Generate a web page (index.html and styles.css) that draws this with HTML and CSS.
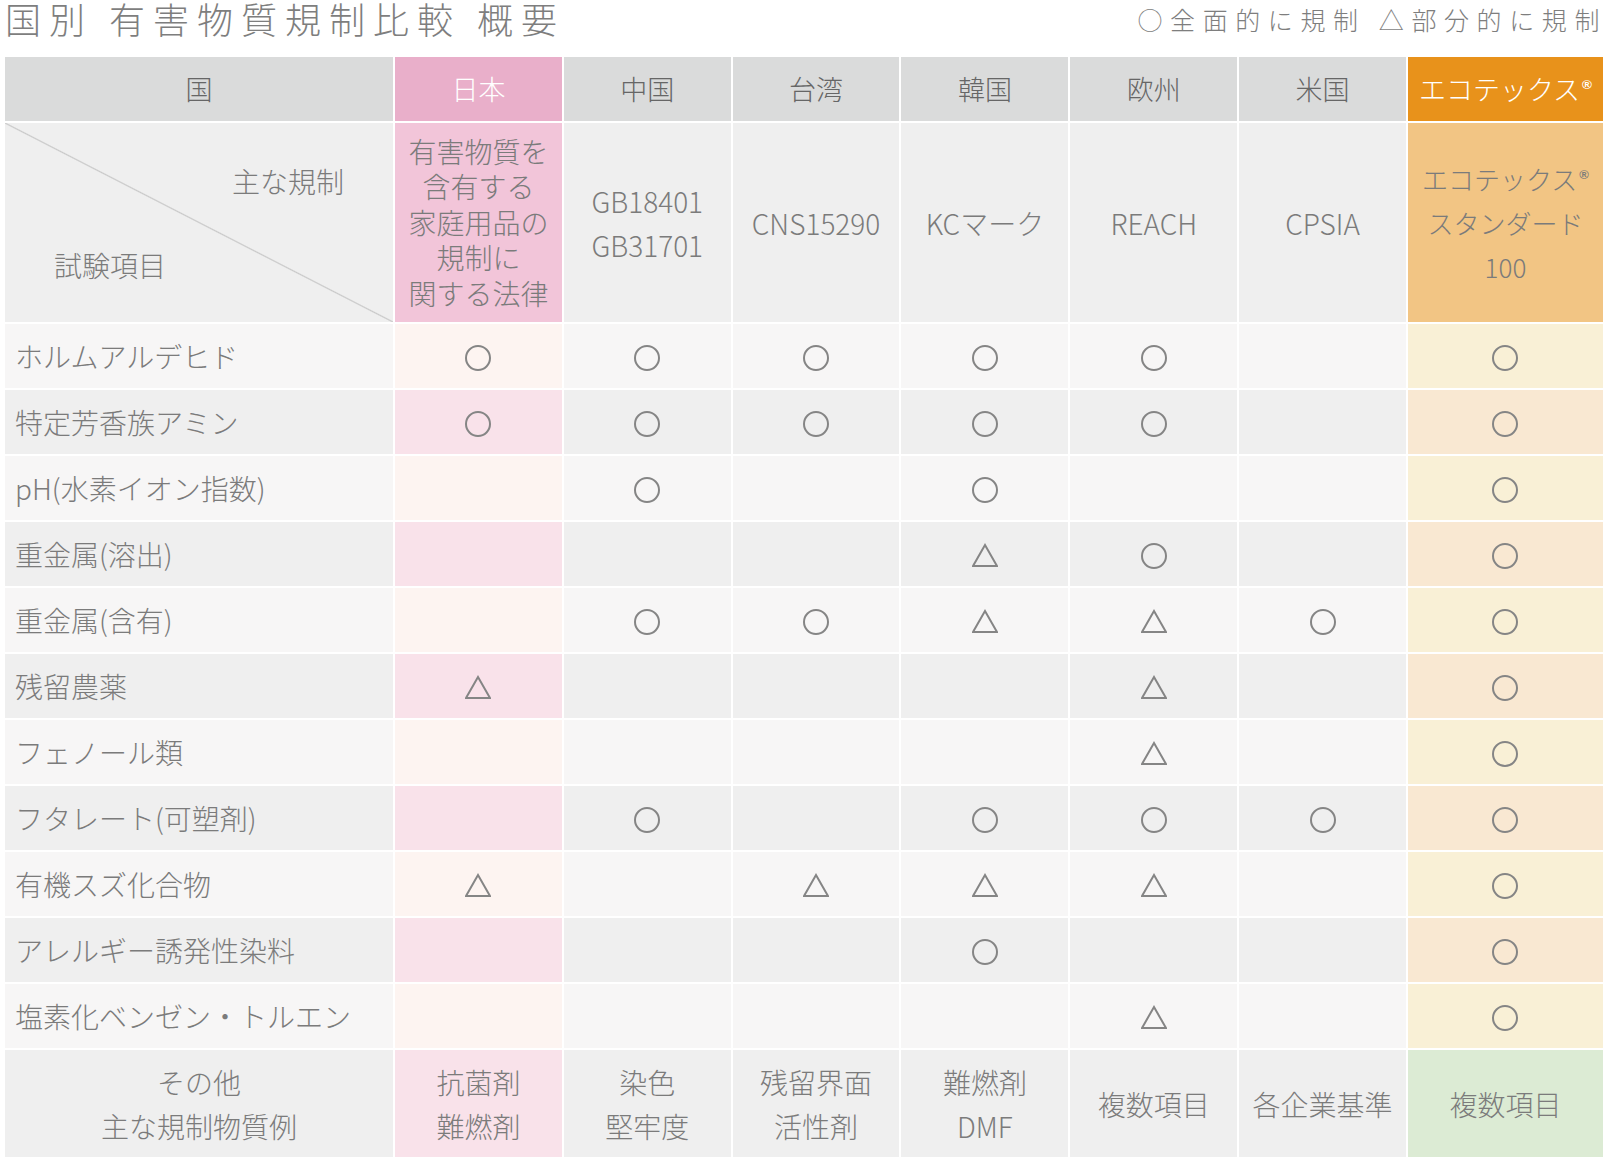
FILE: index.html
```html
<!DOCTYPE html>
<html lang="ja">
<head>
<meta charset="utf-8">
<title>国別 有害物質規制比較 概要</title>
<link rel="stylesheet" href="styles.css">
</head>
<body>
<div class="page">
  <div class="top">
    <h1 class="title">国別 有害物質規制比較 概要</h1>
    <div class="legend">○全面的に規制 △部分的に規制</div>
  </div>

  <div class="grid">
    <!-- header -->
    <div class="c hd"><span>国</span></div>
    <div class="c hd jp"><span>日本</span></div>
    <div class="c hd"><span>中国</span></div>
    <div class="c hd"><span>台湾</span></div>
    <div class="c hd"><span>韓国</span></div>
    <div class="c hd"><span>欧州</span></div>
    <div class="c hd"><span>米国</span></div>
    <div class="c hd oe"><span>エコテックス<sup class="reg">®</sup></span></div>

    <!-- regulations -->
    <div class="c rg diag">
      <span class="diag-top">主な規制</span>
      <span class="diag-bottom">試験項目</span>
    </div>
    <div class="c rg jp tight"><span>有害物質を<br>含有する<br>家庭用品の<br>規制に<br>関する法律</span></div>
    <div class="c rg"><span>GB18401<br>GB31701</span></div>
    <div class="c rg"><span>CNS15290</span></div>
    <div class="c rg"><span>KCマーク</span></div>
    <div class="c rg"><span>REACH</span></div>
    <div class="c rg"><span>CPSIA</span></div>
    <div class="c rg oe small"><span>エコテックス<sup class="reg">®</sup><br>スタンダード<br>100</span></div>

    <!-- data rows -->
    <div class="c lb odd">ホルムアルデヒド</div>
    <div class="c odd jp"><svg class="m"><circle cx="13" cy="13" r="12"/></svg></div>
    <div class="c odd"><svg class="m"><circle cx="13" cy="13" r="12"/></svg></div>
    <div class="c odd"><svg class="m"><circle cx="13" cy="13" r="12"/></svg></div>
    <div class="c odd"><svg class="m"><circle cx="13" cy="13" r="12"/></svg></div>
    <div class="c odd"><svg class="m"><circle cx="13" cy="13" r="12"/></svg></div>
    <div class="c odd"></div>
    <div class="c odd oe"><svg class="m"><circle cx="13" cy="13" r="12"/></svg></div>

    <div class="c lb even">特定芳香族アミン</div>
    <div class="c even jp"><svg class="m"><circle cx="13" cy="13" r="12"/></svg></div>
    <div class="c even"><svg class="m"><circle cx="13" cy="13" r="12"/></svg></div>
    <div class="c even"><svg class="m"><circle cx="13" cy="13" r="12"/></svg></div>
    <div class="c even"><svg class="m"><circle cx="13" cy="13" r="12"/></svg></div>
    <div class="c even"><svg class="m"><circle cx="13" cy="13" r="12"/></svg></div>
    <div class="c even"></div>
    <div class="c even oe"><svg class="m"><circle cx="13" cy="13" r="12"/></svg></div>

    <div class="c lb odd">pH(水素イオン指数)</div>
    <div class="c odd jp"></div>
    <div class="c odd"><svg class="m"><circle cx="13" cy="13" r="12"/></svg></div>
    <div class="c odd"></div>
    <div class="c odd"><svg class="m"><circle cx="13" cy="13" r="12"/></svg></div>
    <div class="c odd"></div>
    <div class="c odd"></div>
    <div class="c odd oe"><svg class="m"><circle cx="13" cy="13" r="12"/></svg></div>

    <div class="c lb even">重金属(溶出)</div>
    <div class="c even jp"></div>
    <div class="c even"></div>
    <div class="c even"></div>
    <div class="c even"><svg class="m"><polygon points="13,2 25,23 1,23"/></svg></div>
    <div class="c even"><svg class="m"><circle cx="13" cy="13" r="12"/></svg></div>
    <div class="c even"></div>
    <div class="c even oe"><svg class="m"><circle cx="13" cy="13" r="12"/></svg></div>

    <div class="c lb odd">重金属(含有)</div>
    <div class="c odd jp"></div>
    <div class="c odd"><svg class="m"><circle cx="13" cy="13" r="12"/></svg></div>
    <div class="c odd"><svg class="m"><circle cx="13" cy="13" r="12"/></svg></div>
    <div class="c odd"><svg class="m"><polygon points="13,2 25,23 1,23"/></svg></div>
    <div class="c odd"><svg class="m"><polygon points="13,2 25,23 1,23"/></svg></div>
    <div class="c odd"><svg class="m"><circle cx="13" cy="13" r="12"/></svg></div>
    <div class="c odd oe"><svg class="m"><circle cx="13" cy="13" r="12"/></svg></div>

    <div class="c lb even">残留農薬</div>
    <div class="c even jp"><svg class="m"><polygon points="13,2 25,23 1,23"/></svg></div>
    <div class="c even"></div>
    <div class="c even"></div>
    <div class="c even"></div>
    <div class="c even"><svg class="m"><polygon points="13,2 25,23 1,23"/></svg></div>
    <div class="c even"></div>
    <div class="c even oe"><svg class="m"><circle cx="13" cy="13" r="12"/></svg></div>

    <div class="c lb odd">フェノール類</div>
    <div class="c odd jp"></div>
    <div class="c odd"></div>
    <div class="c odd"></div>
    <div class="c odd"></div>
    <div class="c odd"><svg class="m"><polygon points="13,2 25,23 1,23"/></svg></div>
    <div class="c odd"></div>
    <div class="c odd oe"><svg class="m"><circle cx="13" cy="13" r="12"/></svg></div>

    <div class="c lb even">フタレート(可塑剤)</div>
    <div class="c even jp"></div>
    <div class="c even"><svg class="m"><circle cx="13" cy="13" r="12"/></svg></div>
    <div class="c even"></div>
    <div class="c even"><svg class="m"><circle cx="13" cy="13" r="12"/></svg></div>
    <div class="c even"><svg class="m"><circle cx="13" cy="13" r="12"/></svg></div>
    <div class="c even"><svg class="m"><circle cx="13" cy="13" r="12"/></svg></div>
    <div class="c even oe"><svg class="m"><circle cx="13" cy="13" r="12"/></svg></div>

    <div class="c lb odd">有機スズ化合物</div>
    <div class="c odd jp"><svg class="m"><polygon points="13,2 25,23 1,23"/></svg></div>
    <div class="c odd"></div>
    <div class="c odd"><svg class="m"><polygon points="13,2 25,23 1,23"/></svg></div>
    <div class="c odd"><svg class="m"><polygon points="13,2 25,23 1,23"/></svg></div>
    <div class="c odd"><svg class="m"><polygon points="13,2 25,23 1,23"/></svg></div>
    <div class="c odd"></div>
    <div class="c odd oe"><svg class="m"><circle cx="13" cy="13" r="12"/></svg></div>

    <div class="c lb even">アレルギー誘発性染料</div>
    <div class="c even jp"></div>
    <div class="c even"></div>
    <div class="c even"></div>
    <div class="c even"><svg class="m"><circle cx="13" cy="13" r="12"/></svg></div>
    <div class="c even"></div>
    <div class="c even"></div>
    <div class="c even oe"><svg class="m"><circle cx="13" cy="13" r="12"/></svg></div>

    <div class="c lb odd">塩素化ベンゼン・トルエン</div>
    <div class="c odd jp"></div>
    <div class="c odd"></div>
    <div class="c odd"></div>
    <div class="c odd"></div>
    <div class="c odd"><svg class="m"><polygon points="13,2 25,23 1,23"/></svg></div>
    <div class="c odd"></div>
    <div class="c odd oe"><svg class="m"><circle cx="13" cy="13" r="12"/></svg></div>

    <!-- other -->
    <div class="c ft"><span>その他<br>主な規制物質例</span></div>
    <div class="c ft jp"><span>抗菌剤<br>難燃剤</span></div>
    <div class="c ft"><span>染色<br>堅牢度</span></div>
    <div class="c ft"><span>残留界面<br>活性剤</span></div>
    <div class="c ft"><span>難燃剤<br>DMF</span></div>
    <div class="c ft"><span>複数項目</span></div>
    <div class="c ft"><span>各企業基準</span></div>
    <div class="c ft oe"><span>複数項目</span></div>
  </div>
</div>
</body>
</html>
```

FILE: styles.css
```css
* { box-sizing: border-box; }

html, body {
  margin: 0;
  padding: 0;
  background: #ffffff;
}

body {
  font-family: "Noto Sans CJK JP", "Noto Sans", sans-serif;
  font-weight: 300;
  color: #7b7b7b;
}

.page {
  width: 1610px;
  padding-left: 5px;
}

.top {
  display: flex;
  justify-content: space-between;
  align-items: flex-start;
  height: 57px;
  width: 1602px;
}

.title {
  margin: 0;
  font-size: 36px;
  line-height: 37px;
  font-weight: 300;
  letter-spacing: 8px;
  color: #7e7e7e;
  white-space: nowrap;
}

.legend {
  margin-top: -1px;
  font-size: 25px;
  line-height: 40px;
  letter-spacing: 7.6px;
  color: #7e7e7e;
  white-space: nowrap;
}

.grid {
  display: grid;
  width: 1598px;
  grid-template-columns: 388px repeat(6, 1fr) 195px;
  grid-template-rows: 64px 199px repeat(11, 64px) 107px;
  gap: 2px;
}

.c {
  display: flex;
  align-items: center;
  justify-content: center;
  text-align: center;
  font-size: 28px;
  line-height: 44px;
}

/* header row */
.hd {
  background: #dadbdb;
  color: #666666;
  font-size: 27px;
}
.hd.jp { background: #e9afca; color: #ffffff; }
.hd.oe { background: #e8921b; color: #ffffff; }

.reg {
  font-family: "Liberation Sans", "DejaVu Sans", sans-serif;
  font-size: 0.5em;
  font-weight: 700;
  line-height: 0;
  vertical-align: 0.8em;
  margin-left: 2px;
}

/* regulation row */
.rg { background: #efefef; }
.rg.jp { background: #f2c5d9; }
.rg.oe { background: #f2c584; }
.tight { line-height: 35.5px; }
.small { font-size: 26px; line-height: 44px; }

.diag {
  flex-direction: column;
  align-items: stretch;
  justify-content: space-between;
  padding: 40px 49px 39px 49px;
  line-height: 36px;
  background:
    linear-gradient(to top right, transparent calc(50% - 1.2px), #c9c9c9 50%, transparent calc(50% + 1.2px)),
    #efefef;
}
.diag-top { text-align: right; }
.diag-bottom { text-align: left; }

/* data rows */
.odd { background: #f7f6f6; }
.even { background: #efefef; }
.odd.jp { background: #fdf4f1; }
.even.jp { background: #f9e2ea; }
.odd.oe { background: #f9f0d6; }
.even.oe { background: #f9e8d2; }

.lb {
  justify-content: flex-start;
  padding-left: 10px;
  text-align: left;
  white-space: nowrap;
}

.m {
  width: 26px;
  height: 26px;
  margin-top: 4px;
  fill: none;
  stroke: #858585;
  stroke-width: 2px;
}

/* footer row */
.ft { background: #efefef; }
.ft.jp { background: #f9e2ea; }
.ft.oe { background: #dcebd4; }
```
